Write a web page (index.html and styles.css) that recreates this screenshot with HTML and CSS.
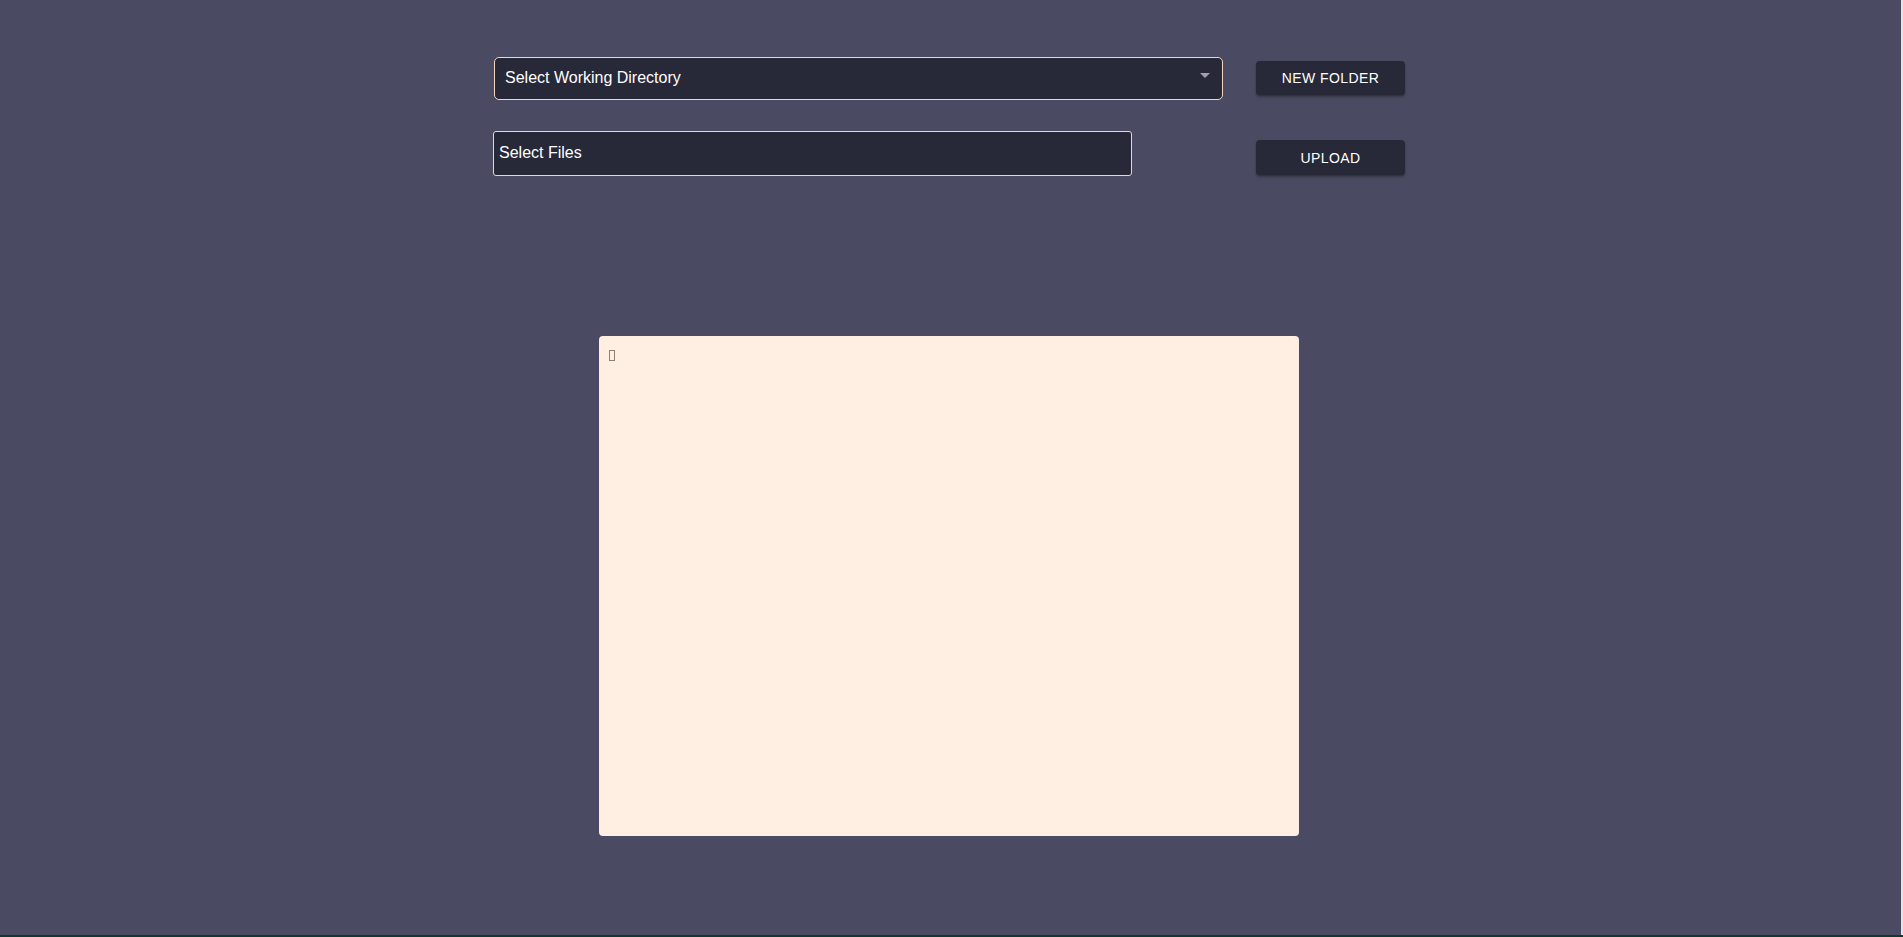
FILE: index.html
```html
<!DOCTYPE html>
<html lang="en">
<head>
<meta charset="utf-8">
<title>Files</title>
<link rel="stylesheet" href="styles.css">
</head>
<body>
<div class="page">
  <div class="controls">
    <div class="row row-dir">
      <div class="select">
        <span class="select-label">Select Working Directory</span>
        <span class="select-arrow"></span>
      </div>
      <button class="btn btn-folder">NEW FOLDER</button>
    </div>
    <div class="row row-files">
      <div class="files">Select Files</div>
      <button class="btn btn-upload">UPLOAD</button>
    </div>
  </div>
  <div class="panel"><span class="tofu"></span></div>
</div>
<div class="footline"></div>
</body>
</html>
```
FILE: styles.css
```css
html {
  background: #e4e4e8;
}
body {
  margin: 0;
  font-family: "Liberation Sans", Arial, sans-serif;
}
.page {
  width: 1901px;
  height: 935px;
  background: #4a4a62;
  padding-top: 57px;
  box-sizing: border-box;
}
.footline {
  height: 2px;
  background: #0c3b2b;
}
.controls {
  width: 911px;
  margin: 0 auto;
  padding-right: 2px;
}
.row {
  display: flex;
  align-items: flex-start;
  justify-content: space-between;
}
.row-files {
  margin-top: 31px;
}
.select {
  width: 729px;
  height: 43px;
  box-sizing: border-box;
  border: 1px solid #f4d4bc;
  border-radius: 5px;
  background: #272838;
  display: flex;
  align-items: center;
  justify-content: space-between;
  padding: 0 12px 1px 10px;
  color: #ffffff;
  font-size: 16px;
}
.select-arrow {
  width: 0;
  height: 0;
  border-left: 5px solid transparent;
  border-right: 5px solid transparent;
  border-top: 5px solid #a0a0a6;
  margin-bottom: 6px;
}
.files {
  width: 639px;
  height: 45px;
  box-sizing: border-box;
  border: 1px solid #f4d4bc;
  border-radius: 3px;
  background: #272838;
  color: #ffffff;
  font-size: 16px;
  display: flex;
  align-items: center;
  padding: 0 5px 1px;
  margin-left: -1px;
}
.btn {
  width: 149px;
  height: 34px;
  border: 0;
  border-radius: 4px;
  background: #272838;
  color: #ffffff;
  font-family: "Liberation Sans", Arial, sans-serif;
  font-size: 14px;
  letter-spacing: 0.4px;
  box-shadow: 0 2px 3px rgba(0, 0, 0, 0.25), 0 1px 1px rgba(0, 0, 0, 0.15);
  padding: 0;
}
.btn-folder {
  margin-top: 4px;
}
.btn-upload {
  margin-top: 9px;
  height: 35px;
}
.panel {
  width: 700px;
  height: 500px;
  margin: 160px auto 0;
  position: relative;
  left: -2px;
  background: #ffeee2;
  border-radius: 4px;
  box-sizing: border-box;
  padding: 14px 0 0 10px;
}
.tofu {
  display: block;
  width: 4px;
  height: 9px;
  border: 1px solid #8c7f78;
}
```
